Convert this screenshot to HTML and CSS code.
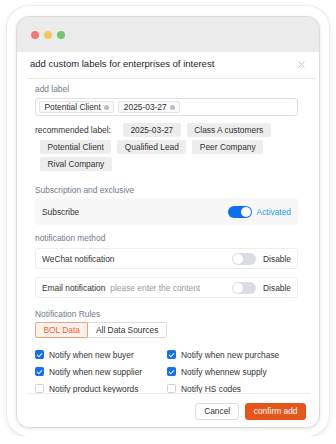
FILE: index.html
```html
<!DOCTYPE html>
<html>
<head>
<meta charset="utf-8">
<link rel="stylesheet" href="styles.css">
</head>
<body>
<div class="card">
  <div class="window">
    <div class="titlebar">
      <span class="light red"></span>
      <span class="light yellow"></span>
      <span class="light green"></span>
    </div>
    <div class="header">
      <span class="title">add custom labels for enterprises of interest</span>
      <svg class="close" width="7" height="7" viewBox="0 0 7 7"><path d="M0.5 0.5L6.5 6.5M6.5 0.5L0.5 6.5" stroke="#c4c4c4" stroke-width="1"/></svg>
    </div>
    <div class="body">
      <div class="section-label first">add label</div>
      <div class="input">
        <span class="tag">Potential Client<span class="tag-x"></span></span>
        <span class="tag">2025-03-27<span class="tag-x"></span></span>
      </div>
      <div class="recommend">
        <span class="rec-label">recommended label:</span>
        <span class="chip">2025-03-27</span>
        <span class="chip">Class A customers</span>
        <span class="chip">Potential Client</span>
        <span class="chip">Qualified Lead</span>
        <span class="chip">Peer Company</span>
        <span class="chip">Rival Company</span>
      </div>
      <div class="section-label sub">Subscription and exclusive</div>
      <div class="row filled">
        <span class="row-text">Subscribe</span>
        <span class="switch-group">
          <span class="switch on"><span class="knob"></span></span>
          <span class="state active">Activated</span>
        </span>
      </div>
      <div class="section-label method">notification method</div>
      <div class="row bordered">
        <span class="row-text">WeChat notification</span>
        <span class="switch-group">
          <span class="switch"><span class="knob"></span></span>
          <span class="state">Disable</span>
        </span>
      </div>
      <div class="row bordered second">
        <span class="row-text">Email notification<span class="placeholder">please enter the content</span></span>
        <span class="switch-group">
          <span class="switch"><span class="knob"></span></span>
          <span class="state">Disable</span>
        </span>
      </div>
      <div class="section-label rules">Notification Rules</div>
      <div class="tabs">
        <span class="tab selected">BOL Data</span>
        <span class="tab">All Data Sources</span>
      </div>
      <div class="checks">
        <label class="check"><span class="box on"></span>Notify when new buyer</label>
        <label class="check"><span class="box on"></span>Notify when new purchase</label>
        <label class="check"><span class="box on"></span>Notify when new supplier</label>
        <label class="check"><span class="box on"></span>Notify whennew supply</label>
        <label class="check"><span class="box"></span>Notify product keywords</label>
        <label class="check"><span class="box"></span>Notify HS codes</label>
      </div>
    </div>
    <div class="footer">
      <button class="btn">Cancel</button>
      <button class="btn primary">confirm add</button>
    </div>
  </div>
</div>
</body>
</html>
```

FILE: styles.css
```css
* { box-sizing: border-box; }
html, body { margin: 0; padding: 0; background: #ffffff; }
body {
  font-family: "Liberation Sans", Arial, sans-serif;
  font-size: 8.4px;
  color: #333333;
  padding: 6px 7px 0 7px;
}
.card {
  width: 322px;
  height: 430px;
  background: #ffffff;
  border-radius: 22px;
  box-shadow: 0 0 0 1px #ebebeb, 0 2px 6px rgba(0,0,0,0.10);
  padding: 11px 10px 9px 10px;
}
.window {
  width: 302px;
  height: 410px;
  border-radius: 12px;
  background: #ffffff;
  box-shadow: 0 0 0 1px #dcdcdc, 0 1px 4px rgba(0,0,0,0.14);
  overflow: hidden;
  display: flex;
  flex-direction: column;
}
.titlebar {
  height: 35px;
  flex: none;
  background: #ebebeb;
  display: flex;
  align-items: center;
  gap: 5px;
  padding-left: 14px;
  padding-bottom: 0px;
}
.light { width: 8px; height: 8px; border-radius: 50%; display: block; }
.red { background: #ec7b74; }
.yellow { background: #f1c75e; }
.green { background: #77c66d; }
.header {
  height: 27px;
  flex: none;
  margin: 0 4px 0 10px;
  border-bottom: 1px solid #e6e6e6;
  display: flex;
  align-items: center;
  justify-content: space-between;
  padding: 0 10px 3px 3px;
}
.title { font-size: 9.5px; color: #23232f; }
.close { display: block; margin-top: 1px; }
.body {
  height: 314px;
  flex: none;
  overflow: hidden;
  padding: 5px 21px 0 18px;
}
.section-label {
  line-height: 10px;
  color: #6d7a8b;
}
.input {
  margin-top: 4px;
  height: 18px;
  border: 1px solid #dedede;
  border-radius: 3px;
  display: flex;
  align-items: center;
  gap: 4px;
  padding-left: 3px;
}
.tag {
  height: 12px;
  display: inline-flex;
  align-items: center;
  gap: 3.5px;
  padding: 0 4px 0 4.5px;
  border: 1px solid #e3e3e3;
  background: #fafafa;
  border-radius: 2px;
  color: #333;
}
.tag-x {
  width: 5px; height: 5px; border-radius: 50%;
  background: #b8bcc4;
  display: block;
}
.recommend {
  margin-top: 7px;
  display: flex;
  flex-wrap: wrap;
  column-gap: 6px;
  row-gap: 3px;
  padding-left: 5px;
}
.rec-label {
  margin-left: -5px;
  margin-right: 6px;
  line-height: 14px;
  color: #333;
}
.chip {
  height: 14px;
  line-height: 14px;
  padding: 0 7.5px;
  background: #ededed;
  border-radius: 2px;
  color: #333;
}
.section-label.sub { margin-top: 14px; }
.row {
  display: flex;
  align-items: center;
  justify-content: space-between;
  padding: 0 7px;
  border-radius: 3px;
}
.row.filled {
  margin-top: 3px;
  height: 27px;
  background: #f7f7f8;
}
.row.bordered {
  margin-top: 5px;
  height: 21px;
  border: 1px solid #ececec;
  padding: 0 6px;
}
.row.bordered.second { margin-top: 8px; }
.row-text { color: #333; }
.placeholder { color: #999; margin-left: 5px; }
.switch-group { display: flex; align-items: center; gap: 7px; }
.switch {
  width: 24px; height: 12px; border-radius: 6px;
  background: #d9dde3;
  position: relative;
  display: block;
}
.switch .knob {
  position: absolute;
  top: 1px; left: 1px;
  width: 10px; height: 10px; border-radius: 50%;
  background: #ffffff;
}
.switch.on { background: #0f6ef0; }
.switch.on .knob { left: 13px; }
.state { color: #333; }
.state.active { color: #2399e0; }
.switch-group .switch.on + .state { margin-left: -2px; }
.section-label.method { margin-top: 8px; }
.section-label.rules { margin-top: 11px; }
.tabs {
  margin-top: 3px;
  display: flex;
}
.tab {
  height: 16px;
  line-height: 14px;
  padding: 0 7.5px;
  border: 1px solid #dcdcdc;
  color: #333;
  background: #fff;
}
.tab:first-child { border-radius: 2px 0 0 2px; }
.tab:last-child { border-radius: 0 2px 2px 0; border-left: none; }
.tab.selected {
  background: #fdf1ea;
  border-color: #e9a283;
  color: #e8673b;
}
.checks {
  margin-top: 8px;
  display: grid;
  grid-template-columns: 132px 132px;
  grid-auto-rows: 17px;
}
.check {
  display: flex;
  align-items: center;
  gap: 5px;
  color: #333;
}
.box {
  width: 9px; height: 9px;
  border: 1px solid #d0d0d0;
  border-radius: 1.5px;
  background: #fff;
  position: relative;
  display: block;
  flex: none;
}
.box.on {
  background: #1570ef;
  border-color: #1570ef;
}
.box.on::after {
  content: "";
  position: absolute;
  left: 2.2px; top: 0.6px;
  width: 2px; height: 4.2px;
  border: solid #fff;
  border-width: 0 1.1px 1.1px 0;
  transform: rotate(45deg);
}
.footer {
  flex: none;
  height: 34px;
  margin: 0 9px 0 10px;
  border-top: 1px solid #ececec;
  display: flex;
  justify-content: flex-end;
  align-items: flex-start;
  gap: 6px;
  padding: 9px 4px 0 0;
}
.btn {
  font-family: "Liberation Sans", Arial, sans-serif;
  font-size: 8.4px;
  height: 17px;
  padding: 0 8px;
  border: 1px solid #dcdcdc;
  background: #fff;
  color: #333;
  border-radius: 3px;
  line-height: 15px;
}
.btn.primary {
  background: #e6561c;
  border-color: #e6561c;
  color: #fff;
  padding: 0 7.5px;
}
```
